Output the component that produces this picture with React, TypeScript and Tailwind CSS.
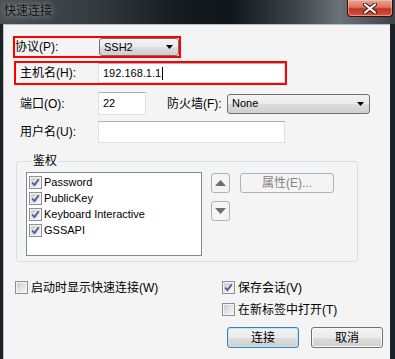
import React from "react";

const font = "font-['Liberation_Sans','Noto_Sans_CJK_SC',sans-serif]";
const btnFace = "bg-[linear-gradient(#f2f2f2_0%,#ebebeb_50%,#dddddd_50%,#cfcfcf_100%)]";

function Check({ checked }: { checked?: boolean }) {
  return (
    <span className="flex h-[13px] w-[13px] shrink-0 items-center justify-center border border-[#8e8f8f] bg-[#f4f4f4] p-[1px]">
      <span className="flex h-full w-full items-center justify-center bg-gradient-to-br from-[#c9ccd1] to-[#f7f7f7]">
        {checked && (
          <svg width="9" height="9" viewBox="0 0 9 9" aria-hidden="true">
            <path d="M1.2 4.6 L3.5 7 L7.8 1.2" fill="none" stroke="#4b5d93" strokeWidth="1.8" />
          </svg>
        )}
      </span>
    </span>
  );
}

function Combo({ value, className }: { value: string; className: string }) {
  return (
    <div
      className={`flex items-center justify-between rounded-[3px] border border-[#707070] ${btnFace} pl-[4px] pr-[5px] text-[11px] leading-none ${className}`}
    >
      <span>{value}</span>
      <svg width="7" height="4" viewBox="0 0 7 4" aria-hidden="true">
        <path d="M0 0h7L3.5 4z" fill="#000" />
      </svg>
    </div>
  );
}

function Field({ value, caret, className }: { value?: string; caret?: boolean; className: string }) {
  return (
    <div
      className={`flex items-center border border-[#dde1e6] border-t-[#abadb3] bg-white pl-[4px] text-[11px] leading-none ${className}`}
    >
      {value}
      {caret && <span className="ml-[1px] h-[13px] w-px bg-black" />}
    </div>
  );
}

function Button({ label, primary }: { label: string; primary?: boolean }) {
  return (
    <button
      type="button"
      className={`flex h-[21px] w-[72px] items-center justify-center rounded-[3px] border text-[12px] leading-none ${btnFace} ${
        primary ? "border-[#3c7fb1] shadow-[inset_0_0_0_1px_#bfe6fb]" : "border-[#707070] shadow-[inset_0_0_0_1px_#f8f8f8]"
      }`}
    >
      {label}
    </button>
  );
}

function ArrowButton({ up }: { up?: boolean }) {
  return (
    <button
      type="button"
      className="flex h-[20px] w-[19px] items-center justify-center rounded-[3px] border border-[#adb2b5] bg-[#f4f4f4]"
    >
      <svg width="11" height="6" viewBox="0 0 11 6" aria-hidden="true">
        <path d={up ? "M0 6h11L5.5 0z" : "M0 0h11L5.5 6z"} fill="#6d6d6d" />
      </svg>
    </button>
  );
}

export default function App() {
  const methods = ["Password", "PublicKey", "Keyboard Interactive", "GSSAPI"];

  return (
    <div className={`h-[359px] w-[395px] overflow-hidden bg-[#1b2328] text-[12px] text-black ${font}`}>
      <div className="flex h-[24px] items-start justify-between bg-[linear-gradient(90deg,#4b5257_0%,#33393d_25%,#151b1f_45%,#0f1519_58%,#3e464c_75%,#6b7379_86%,#3c4449_100%)]">
        <span className="pl-[4px] pt-[5px] text-[12px] leading-none text-[#111] [text-shadow:0_0_6px_rgba(255,255,255,0.7)]">
          快速连接
        </span>
        <div className="mr-[2px] flex h-[17px] w-[46px] items-center justify-center rounded-b-[4px] border border-t-0 border-[#3a0e08] bg-[linear-gradient(#e8a596_0%,#d97562_45%,#c2341d_55%,#d2553c_100%)] shadow-[inset_0_0_0_1px_rgba(255,210,200,0.5)]">
          <svg width="14" height="11" viewBox="0 0 14 11" aria-hidden="true">
            <path d="M2 1.5 L12 9.5 M12 1.5 L2 9.5" stroke="#3b1a14" strokeWidth="4" strokeLinecap="round" />
            <path d="M2 1.5 L12 9.5 M12 1.5 L2 9.5" stroke="#ffffff" strokeWidth="2.2" strokeLinecap="round" />
          </svg>
        </div>
      </div>

      <div className="ml-[3px] h-[335px] w-[387px] border-l border-t border-[#b9c1c6] bg-[#f4f4f4] pt-[11px]">
        <div className="ml-[9px] flex h-[22px] w-[168px] items-center border-2 border-[#ff0000]">
          <span className="w-[84px] leading-none">协议(P):</span>
          <Combo value="SSH2" className="h-[18px] w-[80px]" />
        </div>

        <div className="ml-[10px] mt-[3px] flex h-[24px] w-[273px] items-center border-2 border-[#ff0000]">
          <span className="w-[82px] pl-[4px] leading-none">主机名(H):</span>
          <Field value="192.168.1.1" caret className="h-[20px] w-[187px] border-[#b5cfe7] border-t-[#3d7bad]" />
        </div>

        <div className="mt-[7px] flex h-[23px] items-center">
          <span className="ml-[16px] w-[78px] leading-none">端口(O):</span>
          <Field value="22" className="h-[23px] w-[48px]" />
          <span className="ml-[21px] w-[60px] leading-none">防火墙(F):</span>
          <Combo value="None" className="h-[20px] w-[143px]" />
        </div>

        <div className="mt-[6px] flex h-[22px] items-center">
          <span className="ml-[16px] w-[78px] leading-none">用户名(U):</span>
          <Field className="h-[22px] w-[187px]" />
        </div>

        <fieldset className="ml-[12px] mt-[11px] w-[342px] rounded-[3px] border border-[#d5dfe5] pb-[5px] pl-[9px] pt-[4px]">
          <legend className="ml-[6px] px-[1px] text-[12px] leading-[14px]">鉴权</legend>
          <div className="flex items-start">
            <div className="h-[84px] w-[176px] border border-[#828790] bg-white pt-[1px]">
              {methods.map((m) => (
                <div key={m} className="flex h-[16px] items-center gap-[2px] pl-[2px]">
                  <Check checked />
                  <span className="text-[11px] leading-none">{m}</span>
                </div>
              ))}
            </div>
            <div className="ml-[9px] mt-[1px] flex flex-col gap-[8px]">
              <ArrowButton up />
              <ArrowButton />
            </div>
            <button
              type="button"
              className="ml-[10px] mt-[1px] flex h-[20px] w-[94px] items-center justify-center rounded-[3px] border border-[#adb2b5] bg-[#f4f4f4] text-[12px] leading-none text-[#838383]"
            >
              属性(E)...
            </button>
          </div>
        </fieldset>

        <div className="mt-[19px] flex items-start">
          <div className="ml-[11px] flex h-[13px] w-[207px] items-center gap-[3px]">
            <Check />
            <span className="leading-none">启动时显示快速连接(W)</span>
          </div>
          <div className="flex flex-col">
            <div className="flex h-[13px] items-center gap-[3px]">
              <Check checked />
              <span className="leading-none">保存会话(V)</span>
            </div>
            <div className="mt-[9px] flex h-[13px] items-center gap-[3px]">
              <Check />
              <span className="leading-none">在新标签中打开(T)</span>
            </div>
            <div className="ml-[5px] mt-[11px] flex gap-[12px]">
              <Button label="连接" primary />
              <Button label="取消" />
            </div>
          </div>
        </div>
      </div>
    </div>
  );
}
